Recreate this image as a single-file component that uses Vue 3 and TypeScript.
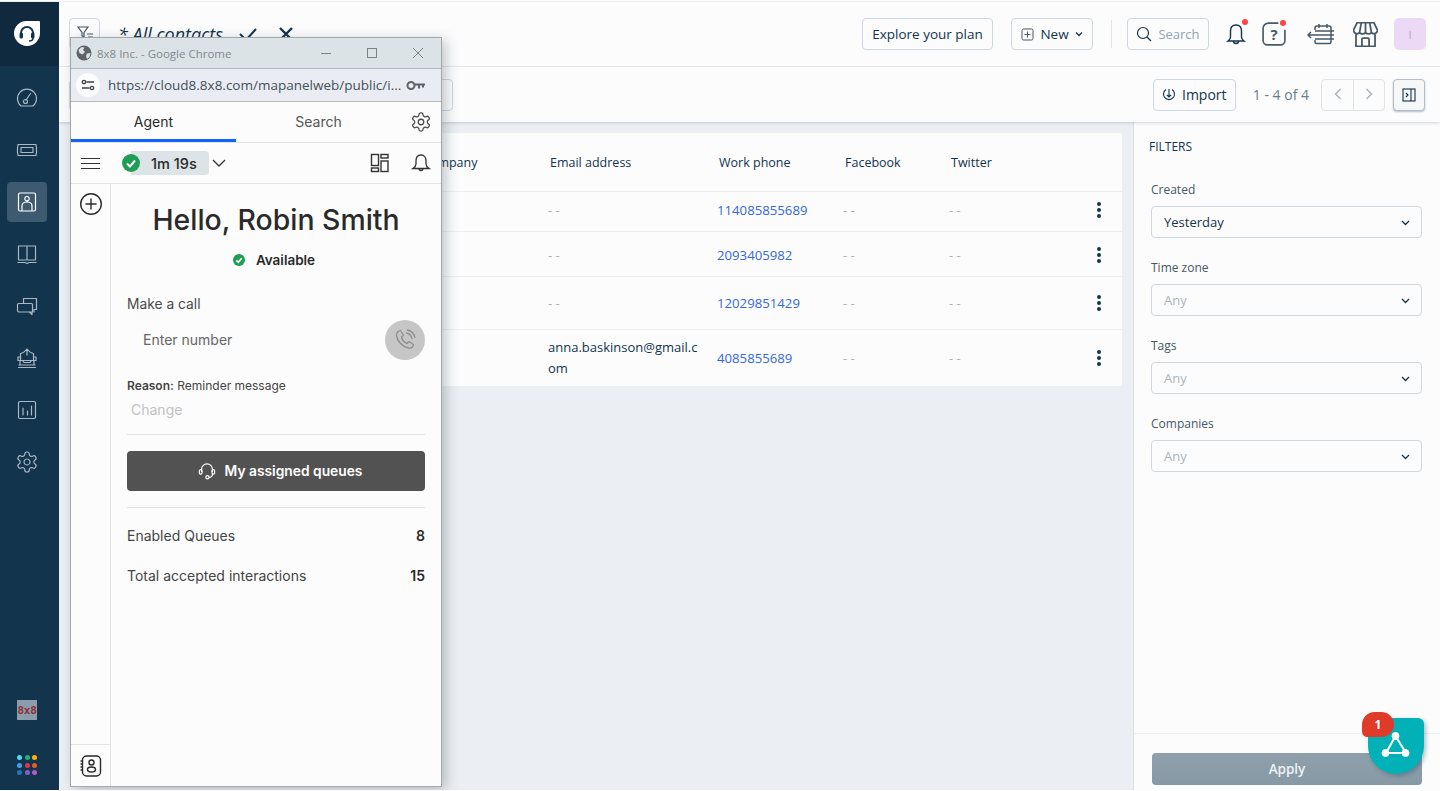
<template>
  <div class="app">
    <aside class="sidebar">
      <div class="logo">
        <svg width="28" height="28" viewBox="0 0 28 28">
          <path d="M13 1h13a1 1 0 0 1 1 1v11a13 13 0 0 1-13 13A13 13 0 0 1 1 13.500 12.500 12.500 0 0 1 13 1z" fill="#fff" />
          <path d="M8 16v-3a6 6 0 0 1 12 0v3" fill="none" stroke="#12344d" stroke-width="2" />
          <rect x="6.500" y="12.500" width="3.500" height="6" rx="1.500" fill="#12344d" />
          <rect x="18" y="12.500" width="3.500" height="6" rx="1.500" fill="#12344d" />
          <path d="M20 18c0 2-2 3-4 3" fill="none" stroke="#12344d" stroke-width="1.500" />
        </svg>
      </div>
      <nav class="nav">
        <div v-for="(item, i) in navItems" :key="i" class="nav-item" :class="{ active: item.active }">
          <svg width="24" height="24" viewBox="0 0 24 24" fill="none" stroke="currentColor" stroke-width="1.200" stroke-linecap="round" stroke-linejoin="round">
            <path :d="item.d" />
          </svg>
        </div>
      </nav>
      <div class="sidebar-foot">
        <div class="brand">8x8</div>
        <div class="dots">
          <span v-for="c in dotColors" :key="c" class="dot" :style="{ background: c }"></span>
        </div>
      </div>
    </aside>

    <main class="main">
      <header class="topbar">
        <div class="top-left">
          <button class="btn filter-btn">
            <svg width="18" height="18" viewBox="0 0 18 18" fill="none" stroke="#475867" stroke-width="1.200"><path d="M2 2h10L8 7.500V12L6 11V7.500zM11 9h6M12 12h5M13 15h4" /></svg>
          </button>
          <span class="view-title">* All contacts</span>
          <svg class="title-check" width="20" height="20" viewBox="0 0 20 20" fill="none" stroke="#12344d" stroke-width="2"><path d="M2 10l6 6L18 5" /></svg>
          <svg class="title-close" width="16" height="16" viewBox="0 0 16 16" fill="none" stroke="#12344d" stroke-width="2.400"><path d="M2 2l12 12M14 2L2 14" /></svg>
        </div>
        <div class="top-right">
          <button class="btn explore">Explore your plan</button>
          <button class="btn new-btn">
            <svg width="13" height="13" viewBox="0 0 13 13" fill="none" stroke="#475867" stroke-width="1"><rect x="1" y="1" width="11" height="11" rx="1.500" /><path d="M6.500 3.500v6M3.500 6.500h6" /></svg>
            <span>New</span>
            <svg width="8" height="8" viewBox="0 0 8 8" fill="none" stroke="#12344d" stroke-width="1.300"><path d="M1 2.500l3 3 3-3" /></svg>
          </button>
          <span class="divider"></span>
          <button class="btn search-btn">
            <svg width="16" height="16" viewBox="0 0 16 16" fill="none" stroke="#12344d" stroke-width="1.200"><circle cx="7" cy="7" r="5.500" /><path d="M11 11l4 4" /></svg>
            <span>Search</span>
          </button>
          <div class="top-icons">
            <div class="top-icon bell">
              <svg width="24" height="26" viewBox="0 0 24 26" fill="none" stroke="#12344d" stroke-width="1.400"><path d="M12 4C8 4 6.500 7 6.500 10v6c0 2-1 3-2.500 4h16c-1.500-1-2.500-2-2.500-4v-6c0-3-1.500-6-5.500-6zM9.500 20a2.500 2.500 0 0 0 5 0" /></svg>
              <i class="red-dot"></i>
            </div>
            <div class="top-icon help">
              <svg width="24" height="24" viewBox="1 1 22 22" fill="none" stroke="#475867" stroke-width="1.500"><path d="M16 2H7a5 5 0 0 0-5 5v11a4 4 0 0 0 4 4h12a4 4 0 0 0 4-4V8" /></svg>
              <span class="q">?</span>
              <i class="red-dot"></i>
            </div>
            <div class="top-icon cal">
              <svg width="28" height="24" viewBox="0 0 28 24" fill="none" stroke="#475867" stroke-width="1.500"><path d="M8 8V6a2 2 0 0 1 2-2h12a2 2 0 0 1 2 2v14a1.500 1.500 0 0 1-1.500 1.500H9.500A1.500 1.500 0 0 1 8 20v-2M12 2v4M20 2v4M8 9h19M8 13h19M1 13h10M4 10l-3 3 3 3M8 17h19" /></svg>
            </div>
            <div class="top-icon store">
              <svg width="25" height="25" viewBox="1.500 1.500 21 21" fill="none" stroke="#475867" stroke-width="1.500" stroke-linejoin="round"><path d="M5 2h14l3 6v1a3 3 0 0 1-5 1.500 3.500 3.500 0 0 1-5 0 3.500 3.500 0 0 1-5 0A3 3 0 0 1 2 9V8zM8.500 2L7 10.500M15.500 2L17 10.500M12 2v8.500M4 12v10h16V12M9 22v-6a1 1 0 0 1 1-1h4a1 1 0 0 1 1 1v6" /></svg>
            </div>
            <div class="avatar"><span>I</span></div>
          </div>
        </div>
      </header>

      <div class="subbar">
        <button class="btn hidden-btn"></button>
        <div class="sub-right">
          <button class="btn import-btn">
            <svg width="14" height="14" viewBox="0 0 14 14" fill="none" stroke="#12344d" stroke-width="1.100"><path d="M4 2.500a5.500 5.500 0 1 0 6 0M7 2v8M4.800 7.800L7 10l2.200-2.200" /></svg>
            <span>Import</span>
          </button>
          <span class="count">1 - 4 of 4</span>
          <div class="pager">
            <button class="page-btn"><svg width="8" height="12" viewBox="0 0 8 12" fill="none" stroke="#a9b5bf" stroke-width="1.500"><path d="M6.500 1l-5 5 5 5" /></svg></button>
            <button class="page-btn"><svg width="8" height="12" viewBox="0 0 8 12" fill="none" stroke="#a9b5bf" stroke-width="1.500"><path d="M1.500 1l5 5-5 5" /></svg></button>
          </div>
          <button class="btn panel-btn">
            <svg width="14" height="14" viewBox="0 0 14 14" fill="none" stroke="#12344d" stroke-width="1.100"><rect x="1" y="1" width="12" height="12" /><path d="M9 1v12M4 5l2 2-2 2" /></svg>
          </button>
        </div>
      </div>

      <div class="body">
        <section class="content">
          <table class="table">
            <colgroup>
              <col class="c-name" /><col class="c-company" /><col class="c-email" /><col class="c-phone" /><col class="c-fb" /><col class="c-tw" /><col />
            </colgroup>
            <thead>
              <tr>
                <th></th><th>Company</th><th>Email address</th><th>Work phone</th><th>Facebook</th><th>Twitter</th><th></th>
              </tr>
            </thead>
            <tbody>
              <tr v-for="row in rows" :key="row.phone">
                <td></td>
                <td></td>
                <td :class="row.email ? 'email' : 'empty'">{{ row.email || '- -' }}</td>
                <td class="phone">{{ row.phone }}</td>
                <td class="empty">- -</td>
                <td class="empty">- -</td>
                <td class="more"><span></span><span></span><span></span></td>
              </tr>
            </tbody>
          </table>
        </section>

        <aside class="filters">
          <div class="filters-scroll">
            <h4 class="filters-title">FILTERS</h4>
            <div v-for="f in filters" :key="f.label" class="field">
              <label>{{ f.label }}</label>
              <div class="select" :class="{ placeholder: !f.value }">
                <span>{{ f.value || 'Any' }}</span>
                <svg width="9" height="9" viewBox="0 0 9 9" fill="none" stroke="#12344d" stroke-width="1.300"><path d="M1 3l3.500 3.500L8 3" /></svg>
              </div>
            </div>
          </div>
          <div class="filters-foot">
            <button class="apply">Apply</button>
          </div>
        </aside>
      </div>
    </main>

    <!-- floating chrome popup -->
    <div class="popup">
      <div class="chrome-title">
        <svg width="16" height="16" viewBox="0 0 16 16"><circle cx="8" cy="8" r="7.500" fill="#5f6368" /><path d="M2.500 5l3-3 3 .5-1.500 2.500 2 2-2.500 2.500-3-1.500zM11 8.500l3.500-.5-1 4-2.500 2-1-3z" fill="#dce3e6" /></svg>
        <span class="chrome-name">8x8 Inc. - Google Chrome</span>
        <div class="win-btns">
          <svg width="12" height="12" viewBox="0 0 12 12" fill="none" stroke="#7b8388"><path d="M1 6.500h10" /></svg>
          <svg width="12" height="12" viewBox="0 0 12 12" fill="none" stroke="#7b8388"><rect x="1.500" y="1.500" width="9" height="9" /></svg>
          <svg width="12" height="12" viewBox="0 0 12 12" fill="none" stroke="#7b8388"><path d="M1 1l10 10M11 1L1 11" /></svg>
        </div>
      </div>
      <div class="chrome-url">
        <span class="site-icon">
          <svg width="14" height="14" viewBox="0 0 14 14" fill="none" stroke="#3c4043" stroke-width="1.300"><circle cx="3" cy="4" r="1.700" /><path d="M5.500 4H13M1 10h7.500" /><circle cx="11" cy="10" r="1.700" /></svg>
        </span>
        <span class="url">https://cloud8.8x8.com/mapanelweb/public/i...</span>
        <svg width="20" height="11" viewBox="0 0 20 11" fill="none" stroke="#5f6368" stroke-width="2"><circle cx="5" cy="5.500" r="3.500" /><path d="M9 4.500h10M13 4.500v4M17 4.500v3" /></svg>
      </div>

      <div class="tabs">
        <div class="tab active">Agent</div>
        <div class="tab">Search</div>
        <svg class="tab-gear" width="22" height="22" viewBox="0 0 24 24" fill="none" stroke="#4d4d4d" stroke-width="1.400"><path :d="gearPath" /><circle cx="12" cy="12" r="3" /></svg>
      </div>

      <div class="toolbar">
        <div class="burger"><span></span><span></span><span></span></div>
        <div class="status-pill">
          <span class="check big">
            <svg width="12" height="12" viewBox="0 0 12 12" fill="none" stroke="#fff" stroke-width="2"><path d="M2 6.500l3 3 5-6" /></svg>
          </span>
          <span class="timer">1m 19s</span>
        </div>
        <svg width="14" height="9" viewBox="0 0 14 9" fill="none" stroke="#333" stroke-width="1.300"><path d="M1 1l6 6 6-6" /></svg>
        <div class="tool-right">
          <svg width="20" height="20" viewBox="0 0 20 20" fill="none" stroke="#333" stroke-width="1.400"><rect x="1.500" y="1.500" width="7" height="11" /><rect x="1.500" y="15" width="7" height="3.500" /><rect x="11" y="1.500" width="7" height="3.500" /><rect x="11" y="8" width="7" height="10.500" /></svg>
          <svg width="20" height="20" viewBox="0 0 20 20" fill="none" stroke="#333" stroke-width="1.300"><path d="M10 2C6.500 2 5 5 5 8v3c0 2-1.500 3.500-3 4.500h16c-1.500-1-3-2.500-3-4.500V8c0-3-1.500-6-5-6zM8 15.500a2 2 0 0 0 4 0" /></svg>
        </div>
      </div>

      <div class="popup-body">
        <div class="rail">
          <svg width="24" height="24" viewBox="0 0 24 24" fill="none" stroke="#2a2a2a" stroke-width="1.400"><circle cx="12" cy="12" r="10.300" /><path d="M12 6.500v11M6.500 12h11" /></svg>
          <div class="rail-foot">
            <svg width="24" height="24" viewBox="0 0 24 24" fill="none" stroke="#2a2a2a" stroke-width="1.400"><rect x="3.500" y="2" width="18" height="20" rx="4" /><circle cx="12.500" cy="8.500" r="2.500" /><ellipse cx="12.500" cy="15.500" rx="4" ry="2.500" /><path d="M1.500 7h2M1.500 10h2M1.500 13h2M1.500 16h2" /></svg>
          </div>
        </div>
        <div class="agent">
          <h1 class="hello">Hello, Robin Smith</h1>
          <div class="available">
            <span class="check small">
              <svg width="8" height="8" viewBox="0 0 12 12" fill="none" stroke="#fff" stroke-width="2.500"><path d="M2 6.500l3 3 5-6" /></svg>
            </span>
            <b>Available</b>
          </div>
          <div class="make-call">Make a call</div>
          <div class="dial">
            <span class="dial-input">Enter number</span>
            <span class="dial-btn">
              <svg width="24" height="24" viewBox="0 0 24 24" fill="none" stroke="#8e8e8e" stroke-width="1.300" stroke-linejoin="round"><path d="M5 3.500l2.500-1 3 4.500-2 2c.5 2.500 3 5.500 5.500 6.500l2-2 4.500 3-1 2.500c-1 1-2.500 1.500-4 1C9 18.500 5 13.500 3.500 8c-.3-2 .5-3.500 1.500-4.500zM13 5c3 .3 5.500 2.700 6 6M14 2c4 .3 7.500 3.500 8 8" /></svg>
            </span>
          </div>
          <div class="reason"><b>Reason:</b> Reminder message</div>
          <div class="change">Change</div>
          <hr class="rule first" />
          <button class="queues">
            <svg width="18" height="18" viewBox="0 0 20 20" fill="none" stroke="#fff" stroke-width="1.300"><path d="M4 11V8a6 6 0 0 1 12 0v3" /><rect x="1.500" y="8.500" width="3" height="5" rx="1.500" /><rect x="15.500" y="8.500" width="3" height="5" rx="1.500" /><path d="M16 13.500c0 2.500-2 3.500-4 3.500" /><circle cx="10.500" cy="17" r="1.800" /></svg>
            <span>My assigned queues</span>
          </button>
          <hr class="rule second" />
          <div class="stat"><span>Enabled Queues</span><b>8</b></div>
          <div class="stat"><span>Total accepted interactions</span><b>15</b></div>
        </div>
      </div>
    </div>

    <!-- floating helper widget -->
    <div class="widget">
      <svg width="30" height="30" viewBox="0 0 30 30" fill="#fff" stroke="#fff">
        <path d="M14.500 5L5 22h20z" fill="none" stroke-width="2" />
        <circle cx="14.500" cy="5" r="3.500" /><circle cx="4.500" cy="22" r="3.500" /><circle cx="24.500" cy="22" r="3.500" />
      </svg>
      <span class="badge">1</span>
    </div>
  </div>
</template>

<script setup lang="ts">
const gearPath =
  "M12.220 2h-.44a2 2 0 0 0-2 2v.18a2 2 0 0 1-1 1.730l-.43.25a2 2 0 0 1-2 0l-.15-.08a2 2 0 0 0-2.730.73l-.22.38a2 2 0 0 0 .73 2.730l.15.1a2 2 0 0 1 1 1.720v.51a2 2 0 0 1-1 1.740l-.15.09a2 2 0 0 0-.73 2.730l.22.38a2 2 0 0 0 2.730.73l.15-.08a2 2 0 0 1 2 0l.43.25a2 2 0 0 1 1 1.730V20a2 2 0 0 0 2 2h.44a2 2 0 0 0 2-2v-.18a2 2 0 0 1 1-1.730l.43-.25a2 2 0 0 1 2 0l.15.08a2 2 0 0 0 2.730-.73l.22-.39a2 2 0 0 0-.73-2.730l-.15-.08a2 2 0 0 1-1-1.740v-.5a2 2 0 0 1 1-1.740l.15-.09a2 2 0 0 0 .73-2.730l-.22-.38a2 2 0 0 0-2.730-.73l-.15.08a2 2 0 0 1-2 0l-.43-.25a2 2 0 0 1-1-1.730V4a2 2 0 0 0-2-2z";

const navItems = [
  { d: "M6 20a9.500 9.500 0 1 1 12 0zM11 14l4.500-6.500M8.500 15.500a2 2 0 1 0 4 0 2 2 0 1 0-4 0" },
  { d: "M3 6.500h18a3 3 0 0 0 .5 2.500v6a3 3 0 0 0-.5 2.500H3a3 3 0 0 0-.5-2.500V9A3 3 0 0 0 3 6.500zM6 9.500h12v5H6z" },
  { d: "M5 3h14a1.500 1.500 0 0 1 1.500 1.500v15A1.500 1.500 0 0 1 19 21H5a1.500 1.500 0 0 1-1.500-1.500v-15A1.500 1.500 0 0 1 5 3zM12 6.500a2.200 2.200 0 1 0 .01 0zM7 21v-5c0-2.500 2-4 5-4s5 1.500 5 4v5" },
  { d: "M3.500 4h8.500v14H3.500zM12 4h8.500v14H12zM3 20.500h7l2 1 2-1h7" },
  { d: "M8.500 9V4.500h13v11H19v2.500M4 9.500h12.500a1 1 0 0 1 1 1v7.500H4a1.500 1.500 0 0 1-1.500-1.500v-6A1.500 1.500 0 0 1 4 9.500zM14.500 18l2.500 2.500v-2.500" },
  { d: "M5.500 7.500V14M18.500 7.500V14M5.500 7.500C9 7 10.500 5 12 3c1.500 2 3 4 6.500 4.500M12 3v6M3 11h2.500M18.500 11H21M3 11v3.500h18V11M7.500 14.500l1.500 2h6l1.500-2M4 19h16M3.500 21.500h17M5 14.500V19M19 14.500V19" },
  { d: "M5 3.500h14A1.500 1.500 0 0 1 20.500 5v14a1.500 1.500 0 0 1-1.500 1.500H5A1.500 1.500 0 0 1 3.500 19V5A1.500 1.500 0 0 1 5 3.500zM8 10v7M12.500 13v4M16.500 8v9" },
  { d: gearPath + "M12 9a3 3 0 1 0 .01 0z" },
].map((item, i) => ({ ...item, active: i === 2 }));

const dotColors = [
  "#4fd8ee", "#1fb36b", "#ffb300",
  "#4a9ee0", "#e2344e", "#ec5a24",
  "#2b6fb8", "#8c5ac8", "#b45ac0",
];

const rows = [
  { email: "", phone: "114085855689" },
  { email: "", phone: "2093405982" },
  { email: "", phone: "12029851429" },
  { email: "anna.baskinson@gmail.com", phone: "4085855689" },
];

const filters = [
  { label: "Created", value: "Yesterday" },
  { label: "Time zone", value: "" },
  { label: "Tags", value: "" },
  { label: "Companies", value: "" },
];
</script>

<style>
html,
body {
  margin: 0;
  background: #fcfcfd;
}
</style>

<style scoped>
.app {
  position: relative;
  display: flex;
  height: 789px;
  margin-top: 1px;
  border-top: 1px solid #ebeff3;
  overflow: hidden;
  box-sizing: border-box;
  font-family: "Open Sans", "Noto Sans", sans-serif;
  font-size: 13px;
  color: #12344d;
  background: #fcfcfd;
}

.sidebar {
  width: 59px;
  flex: none;
  display: flex;
  flex-direction: column;
  background: #12344d;
}

.logo {
  height: 64px;
  display: flex;
  align-items: center;
  justify-content: center;
  padding-right: 5px;
  background: #0f2a3f;
}

.nav {
  display: flex;
  flex-direction: column;
  align-items: center;
  gap: 12px;
  padding: 12px 5px 0 0;
}

.nav-item {
  width: 40px;
  height: 40px;
  display: flex;
  align-items: center;
  justify-content: center;
  border-radius: 4px;
  color: #aab8c3;
}

.nav-item.active {
  background: #3d5a70;
  color: #fff;
}

.sidebar-foot {
  margin-top: auto;
  display: flex;
  flex-direction: column;
  align-items: center;
  gap: 35px;
  padding: 0 5px 15px 0;
}

.brand {
  width: 20px;
  height: 20px;
  display: flex;
  align-items: center;
  justify-content: center;
  background: #8b9daa;
  color: #8e2f3c;
  font: 700 11px "DejaVu Sans Mono", monospace;
  letter-spacing: -0.3px;
}

.dots {
  display: grid;
  grid-template-columns: repeat(3, 5px);
  gap: 2.500px;
}

.dot {
  width: 5px;
  height: 5px;
  border-radius: 50%;
}

.main {
  flex: 1;
  min-width: 0;
  display: flex;
  flex-direction: column;
}

.btn {
  height: 32px;
  box-sizing: border-box;
  display: inline-flex;
  align-items: center;
  justify-content: center;
  gap: 6px;
  padding: 0;
  border: 1px solid #cfd7df;
  border-radius: 4px;
  background: #fcfcfd;
  color: #12344d;
  font: inherit;
  font-size: 13.500px;
  font-weight: 500;
}

.topbar {
  height: 65px;
  flex: none;
  box-sizing: border-box;
  display: flex;
  align-items: center;
  justify-content: space-between;
  padding: 0 14px 0 10px;
  border-bottom: 1px solid #ebeff3;
}

.top-left {
  display: flex;
  align-items: center;
}

.filter-btn {
  width: 31px;
}

.view-title {
  margin-left: 18px;
  font-size: 18px;
  font-style: italic;
  font-weight: 500;
}

.title-check {
  margin-left: 15px;
}

.title-close {
  margin-left: 20px;
}

.top-right {
  display: flex;
  align-items: center;
}

.explore {
  width: 131px;
}

.new-btn {
  width: 82px;
  margin-left: 18px;
}

.divider {
  width: 1px;
  height: 28px;
  margin: 0 15px 0 18px;
  background: #dfe4e9;
}

.search-btn {
  width: 82px;
  font-size: 13px;
  font-weight: 400;
  color: #92a2b1;
}

.top-icons {
  display: flex;
  align-items: center;
  margin-left: 15px;
}

.top-icon {
  position: relative;
  display: flex;
  align-items: center;
  justify-content: center;
}

.top-icon svg {
  flex: none;
}

.bell {
  width: 24px;
}

.help {
  margin-left: 14px;
  width: 24px;
}

.cal {
  margin-left: 21px;
  width: 28px;
}

.store {
  margin-left: 18px;
  width: 24px;
}

.q {
  position: absolute;
  inset: 0;
  display: flex;
  align-items: center;
  justify-content: center;
  font-size: 15px;
  font-weight: 700;
  color: #475867;
}

.red-dot {
  position: absolute;
  top: -2px;
  right: 0;
  width: 6px;
  height: 6px;
  border-radius: 50%;
  background: #f44;
}

.avatar {
  width: 32px;
  height: 32px;
  margin-left: 17px;
  display: flex;
  align-items: center;
  justify-content: center;
  border-radius: 5px;
  background: #ecd9f5;
  color: #b7a5c4;
  font-size: 11px;
}

.subbar {
  position: relative;
  height: 55px;
  flex: none;
  box-sizing: border-box;
  display: flex;
  align-items: center;
  justify-content: space-between;
  padding: 1px 15px 0 10px;
  background: #fcfcfd;
  box-shadow: 0 1px 3px rgba(18, 52, 77, 0.2);
}

.hidden-btn {
  width: 384px;
}

.sub-right {
  display: flex;
  align-items: center;
}

.import-btn {
  width: 83px;
  padding-bottom: 2px;
  font-size: 14px;
  font-weight: 500;
}

.count {
  margin-left: 17px;
  padding-bottom: 2px;
  color: #6b7c8a;
  font-size: 14px;
}

.pager {
  display: flex;
  margin-left: 12px;
  border: 1px solid #dfe4e9;
  border-radius: 4px;
}

.page-btn {
  width: 31px;
  height: 30px;
  padding: 0;
  border: 0;
  background: transparent;
}

.page-btn + .page-btn {
  border-left: 1px solid #dfe4e9;
}

.panel-btn {
  width: 32px;
  margin-left: 8px;
  background: #f5f7f9;
  border-color: #b5bec6;
  box-shadow: 0 1px 2px rgba(60, 70, 80, 0.35);
}

.body {
  flex: 1;
  min-height: 0;
  display: flex;
}

.content {
  flex: 1;
  min-width: 0;
  padding: 11px 11px 0;
  background: #ebeff3;
}

.table {
  width: 100%;
  table-layout: fixed;
  border-collapse: collapse;
  background: #fcfcfd;
  border-radius: 3px;
  font-size: 12.500px;
}

.c-name { width: 350px; }
.c-company { width: 128px; }
.c-email { width: 169px; }
.c-phone { width: 126px; }
.c-fb { width: 106px; }
.c-tw { width: 127px; }

th {
  height: 58px;
  padding: 0 0 0 2px;
  text-align: left;
  font-weight: 500;
}

td {
  padding: 0;
  border-top: 1px solid #ebeff3;
}

tbody tr:nth-child(1) { height: 40px; }
tbody tr:nth-child(2) { height: 45px; }
tbody tr:nth-child(3) { height: 53px; }
tbody tr:nth-child(4) { height: 56px; }

tbody tr:nth-child(1) td { padding-bottom: 3px; }
tbody tr:nth-child(2) td { padding-top: 2px; }

.empty {
  color: #a5b2bd;
  font-size: 13px;
}

.email {
  line-height: 21px;
  font-size: 13px;
  word-break: break-all;
}

tbody td.email {
  padding-right: 14px;
}

.phone {
  color: #3468d8;
  font-size: 13.200px;
}

.more {
  text-align: center;
}

.more span {
  display: block;
  width: 4px;
  height: 4px;
  margin: 2px auto;
  border-radius: 50%;
  background: #12344d;
}

.filters {
  width: 307px;
  flex: none;
  box-sizing: border-box;
  display: flex;
  flex-direction: column;
  border-left: 1px solid #dbe2e8;
  background: #fcfcfd;
}

.filters-scroll {
  flex: 1;
  padding: 17px 18px 0 17px;
}

.filters-title {
  margin: 0 0 19px -2px;
  font-size: 12px;
  line-height: 16px;
  font-weight: 500;
}

.field {
  height: 78px;
  padding-top: 1px;
  box-sizing: border-box;
}

.field label {
  display: block;
  height: 17px;
  line-height: 17px;
  margin-top: 6px;
  margin-bottom: 8px;
  font-size: 12px;
  color: #475867;
}

.select {
  height: 32px;
  box-sizing: border-box;
  display: flex;
  align-items: center;
  justify-content: space-between;
  padding: 0 11px 0 12px;
  border: 1px solid #cfd7df;
  border-radius: 4px;
  font-size: 13px;
  font-weight: 500;
}

.select.placeholder {
  color: #a9b5bf;
  font-weight: 400;
}

.filters-foot {
  height: 57px;
  flex: none;
  box-sizing: border-box;
  padding: 19px 18px 0;
  border-top: 1px solid #ebeff3;
}

.apply {
  width: 270px;
  height: 32px;
  border: 0;
  border-radius: 4px;
  background: linear-gradient(#8fa0ac, #8799a5);
  color: #eef1f3;
  font: 600 13.500px "Open Sans", sans-serif;
}

.popup {
  position: absolute;
  left: 70px;
  top: 35px;
  width: 372px;
  height: 750px;
  box-sizing: border-box;
  display: flex;
  flex-direction: column;
  border: 1px solid #a2a7aa;
  background: #fcfcfc;
  box-shadow: 4px 3px 12px rgba(60, 70, 80, 0.3);
  font-family: Inter, "Liberation Sans", sans-serif;
  color: #2a2a2a;
}

.chrome-title {
  height: 30px;
  flex: none;
  display: flex;
  align-items: center;
  gap: 5px;
  padding: 0 17px 0 5px;
  background: #dce3e6;
  border-bottom: 1px solid #b5babd;
  font-family: "Open Sans", sans-serif;
}

.chrome-name {
  font-size: 11.500px;
  color: #82898e;
}

.win-btns {
  margin-left: auto;
  display: flex;
  gap: 34px;
}

.chrome-url {
  height: 32px;
  flex: none;
  display: flex;
  align-items: center;
  padding: 0 15px 0 5px;
  background: #e9edf3;
  border-bottom: 1px solid #b5babd;
  font-family: "Open Sans", sans-serif;
}

.site-icon {
  width: 24px;
  height: 24px;
  flex: none;
  display: flex;
  align-items: center;
  justify-content: center;
  border-radius: 50%;
  background: #fcfcfc;
}

.url {
  flex: 1;
  margin-left: 8px;
  font-size: 13.500px;
  color: #44505a;
  white-space: nowrap;
}

.tabs {
  position: relative;
  height: 41px;
  flex: none;
  display: flex;
  border-bottom: 1px solid #e3e3e3;
  box-sizing: border-box;
}

.tab {
  width: 165px;
  display: flex;
  align-items: center;
  justify-content: center;
  padding-bottom: 2px;
  box-sizing: border-box;
  font-size: 14px;
  color: #555;
}

.tab.active {
  color: #2a2a2a;
  box-shadow: inset 0 -3px 0 #0f62fe;
}

.tab-gear {
  position: absolute;
  right: 9px;
  top: 9px;
}

.toolbar {
  height: 41px;
  flex: none;
  box-sizing: border-box;
  display: flex;
  align-items: center;
  padding: 0 10px;
  border-bottom: 1px solid #e3e3e3;
}

.burger {
  width: 19px;
  display: flex;
  flex-direction: column;
  gap: 4px;
}

.burger span {
  height: 1px;
  background: #333;
}

.status-pill {
  display: flex;
  align-items: center;
  height: 24px;
  margin-left: 22px;
  margin-right: 3px;
  padding-right: 12px;
  border-radius: 4px;
  background: linear-gradient(90deg, transparent 9px, #dce4e7 9px);
}

.check {
  display: flex;
  align-items: center;
  justify-content: center;
  border-radius: 50%;
  background: #1f9d55;
}

.check.big {
  width: 18px;
  height: 18px;
}

.check.small {
  width: 12px;
  height: 12px;
}

.timer {
  margin-left: 11px;
  font-size: 14.500px;
  font-weight: 500;
}

.tool-right {
  margin-left: auto;
  display: flex;
  align-items: center;
  gap: 21px;
}

.popup-body {
  flex: 1;
  min-height: 0;
  display: flex;
}

.rail {
  width: 40px;
  flex: none;
  box-sizing: border-box;
  display: flex;
  flex-direction: column;
  align-items: center;
  padding-top: 8px;
  border-right: 1px solid #e3e3e3;
}

.rail-foot {
  width: 100%;
  height: 41px;
  margin-top: auto;
  display: flex;
  align-items: center;
  justify-content: center;
  border-top: 1px solid #e3e3e3;
}

.agent {
  flex: 1;
  min-width: 0;
  padding: 0 16px;
}

.hello {
  margin: 18px 0 0;
  text-align: center;
  font-size: 28.400px;
  line-height: 36px;
  font-weight: 500;
}

.available {
  display: flex;
  align-items: center;
  justify-content: center;
  gap: 11px;
  height: 20px;
  margin-top: 12px;
  padding-right: 4px;
  font-size: 13.500px;
}

.available b {
  font-weight: 600;
}

.make-call {
  margin-top: 24px;
  font-size: 13.800px;
  line-height: 20px;
  color: #4a4a4a;
}

.dial {
  display: flex;
  align-items: center;
  justify-content: space-between;
  height: 40px;
  margin-top: 6px;
  padding-left: 16px;
}

.dial-input {
  padding-bottom: 2px;
  font-size: 14px;
  color: #666;
}

.dial-btn {
  width: 40px;
  height: 40px;
  display: flex;
  align-items: center;
  justify-content: center;
  border-radius: 50%;
  background: #c6c6c6;
}

.reason {
  margin-top: 17px;
  font-size: 12px;
  line-height: 18px;
  color: #444;
}

.reason b {
  font-weight: 600;
}

.change {
  margin-top: 5px;
  padding-left: 4px;
  font-size: 14px;
  line-height: 20px;
  color: #c2c2c2;
}

.rule {
  margin: 0;
  border: 0;
  border-top: 1px solid #e3e3e3;
}

.rule.first {
  margin-top: 14px;
}

.rule.second {
  margin-top: 16px;
}

.queues {
  width: 100%;
  height: 40px;
  margin-top: 16px;
  padding: 0 0 0 8px;
  display: flex;
  align-items: center;
  justify-content: center;
  gap: 9px;
  border: 0;
  border-radius: 4px;
  background: #525252;
  color: #fff;
  font: 600 13.800px Inter, sans-serif;
}

.stat {
  display: flex;
  justify-content: space-between;
  align-items: center;
  height: 20px;
  margin-bottom: 20px;
  font-size: 14px;
  color: #444;
}

.rule.second + .stat {
  margin-top: 17px;
}

.stat b {
  font-weight: 600;
  color: #2a2a2a;
}

.widget {
  position: absolute;
  left: 1368px;
  top: 716px;
  width: 56px;
  height: 56px;
  display: flex;
  align-items: center;
  justify-content: center;
  border-radius: 6px 6px 28px 28px;
  background: #00b2b8;
  box-shadow: 2px 2px 4px rgba(18, 52, 77, 0.3);
}

.badge {
  position: absolute;
  left: -6px;
  top: -6px;
  width: 32px;
  height: 25px;
  display: flex;
  align-items: center;
  justify-content: center;
  border-radius: 14px 14px 14px 6px;
  background: #e03a2a;
  color: #fff;
  font: 700 12px "Open Sans", sans-serif;
}
</style>
